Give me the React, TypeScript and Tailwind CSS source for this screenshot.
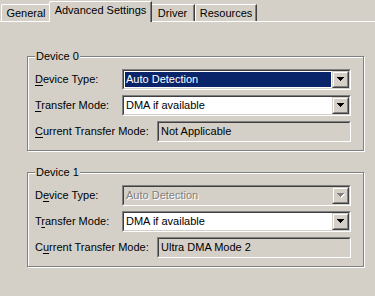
import React from "react";

const font = { fontFamily: '"Liberation Sans", Arial, sans-serif' };

const Arrow: React.FC<{ disabled?: boolean }> = ({ disabled }) => (
  <svg width="8" height="5" viewBox="0 0 8 5" shapeRendering="crispEdges">
    {disabled && <path d="M1 1h7v1h-7z M2 2h5v1h-5z M3 3h3v1h-3z M4 4h1v1h-1z" fill="#ffffff" />}
    <path d="M0 0h7v1h-7z M1 1h5v1h-5z M2 2h3v1h-3z M3 3h1v1h-1z" fill={disabled ? "#808080" : "#000000"} />
  </svg>
);

const Sunken: React.FC<{ className?: string; children: React.ReactNode }> = ({ className, children }) => (
  <div className={"border border-t-[#808080] border-l-[#808080] border-b-white border-r-white " + (className ?? "")}>
    <div className="h-full border border-t-[#404040] border-l-[#404040] border-b-[#d4d0c8] border-r-[#d4d0c8]">
      {children}
    </div>
  </div>
);

const Combo: React.FC<{ value: string; selected?: boolean; disabled?: boolean }> = ({ value, selected, disabled }) => (
  <Sunken className="w-[229px] h-[21px]">
    <div className={"flex h-full " + (disabled ? "bg-[#d4d0c8]" : "bg-white")}>
      <div className="flex-1 p-[1px]">
        <div
          className={
            "h-full flex items-center pl-[1px] " +
            (selected ? "bg-[#0a246a] text-white" : disabled ? "text-[#808080] [text-shadow:1px_1px_0_#fff]" : "text-black")
          }
        >
          {value}
        </div>
      </div>
      <div className="w-[17px] h-[17px] bg-[#d4d0c8] border border-t-[#d4d0c8] border-l-[#d4d0c8] border-b-[#404040] border-r-[#404040]">
        <div className="h-full flex items-center justify-center border border-t-white border-l-white border-b-[#808080] border-r-[#808080]">
          <Arrow disabled={disabled} />
        </div>
      </div>
    </div>
  </Sunken>
);

const ReadOnly: React.FC<{ value: string }> = ({ value }) => (
  <Sunken className="w-[194px] h-[21px]">
    <div className="h-full flex items-center pl-[2px] bg-[#d4d0c8] text-black">{value}</div>
  </Sunken>
);

const Key: React.FC<{ children: React.ReactNode }> = ({ children }) => <span className="underline underline-offset-[2px]">{children}</span>;

const Group: React.FC<{
  title: string;
  labels: [React.ReactNode, React.ReactNode, React.ReactNode];
  typeValue: string;
  typeSelected?: boolean;
  typeDisabled?: boolean;
  current: string;
  className?: string;
}> = ({ title, labels, typeValue, typeSelected, typeDisabled, current, className }) => (
  <fieldset
    className={
      "w-[337px] border border-[#808080] shadow-[inset_1px_1px_0_#fff,1px_1px_0_#fff] " + (className ?? "")
    }
  >
    <legend className="ml-[7px] px-[1px] bg-[#d4d0c8] leading-[13px]">{title}</legend>
    <div className="flex flex-col gap-[5px] pt-[6px] pb-[8px] pl-[7px]">
      <div className="flex items-center h-[21px]">
        <div className="w-[87px]">{labels[0]}</div>
        <Combo value={typeValue} selected={typeSelected} disabled={typeDisabled} />
      </div>
      <div className="flex items-center h-[21px]">
        <div className="w-[87px]">{labels[1]}</div>
        <Combo value="DMA if available" />
      </div>
      <div className="flex items-center h-[21px]">
        <div className="w-[122px]">{labels[2]}</div>
        <ReadOnly value={current} />
      </div>
    </div>
  </fieldset>
);

const tabs = [
  { name: "General", w: "w-[50px]" },
  { name: "Advanced Settings", w: "w-[99px]", selected: true },
  { name: "Driver", w: "w-[45px]" },
  { name: "Resources", w: "w-[62px]" },
];

export default function App() {
  return (
    <div className="w-[375px] h-[296px] bg-[#d4d0c8] text-[11px] leading-[13px] text-black overflow-hidden" style={font}>
      <div className="flex items-end h-[21px] pl-[1px]">
        {tabs.map((t) =>
          t.selected ? (
            <div
              key={t.name}
              className={
                "relative z-10 -mx-[2px] -mb-px h-[21px] pb-[3px] flex items-center justify-center bg-[#d4d0c8] border-l border-t border-white border-r border-r-[#404040] rounded-tl-[2px] shadow-[inset_-1px_0_0_#808080] " +
                "w-[103px]"
              }
            >
              {t.name}
            </div>
          ) : (
            <div
              key={t.name}
              className={
                "h-[17px] flex items-center justify-center border-l border-t border-white border-r border-r-[#404040] rounded-tl-[2px] shadow-[inset_-1px_0_0_#808080] " +
                t.w
              }
            >
              {t.name}
            </div>
          )
        )}
      </div>
      <div className="h-px bg-white" />
      <div className="pl-[27px] pt-[28px]">
        <Group
          title="Device 0"
          labels={[
            <><Key>D</Key>evice Type:</>,
            <><Key>T</Key>ransfer Mode:</>,
            <><Key>C</Key>urrent Transfer Mode:</>,
          ]}
          typeValue="Auto Detection"
          typeSelected
          current="Not Applicable"
        />
        <Group
          className="mt-[15px]"
          title="Device 1"
          labels={[
            <>D<Key>e</Key>vice Type:</>,
            <>T<Key>r</Key>ansfer Mode:</>,
            <>C<Key>u</Key>rrent Transfer Mode:</>,
          ]}
          typeValue="Auto Detection"
          typeDisabled
          current="Ultra DMA Mode 2"
        />
      </div>
    </div>
  );
}
